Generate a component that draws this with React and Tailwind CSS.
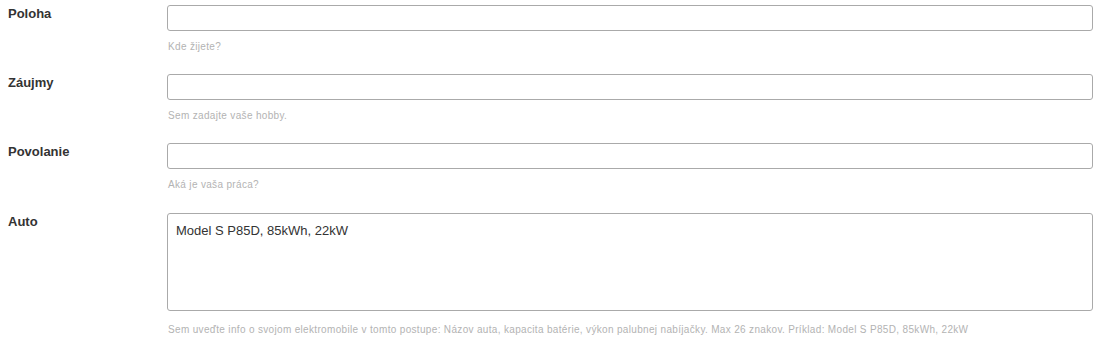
import React from 'react';

const fields = [
  { label: 'Poloha', hint: 'Kde žijete?' },
  { label: 'Záujmy', hint: 'Sem zadajte vaše hobby.' },
  { label: 'Povolanie', hint: 'Aká je vaša práca?' },
];

const Field = ({ label, hint, children, topClass = 'pt-[5px]', hintClass = 'mt-[9px] mb-[20px]' }) => (
  <div className="flex">
    <label className={`w-[167px] shrink-0 pl-2 text-[13px] leading-[18px] font-bold text-[#333] ${topClass}`}>
      {label}
    </label>
    <div className={`w-[926px] ${topClass}`}>
      {children}
      <p className={`text-[10px] leading-[14px] tracking-[0.33px] text-[#b3b3b3] pl-px ${hintClass}`}>{hint}</p>
    </div>
  </div>
);

export default function App() {
  return (
    <div className="w-[1100px] h-[348px] bg-white overflow-hidden font-['Liberation_Sans',Arial,sans-serif]">
      {fields.map((f) => (
        <div key={f.label} className="-mb-[5px]">
          <Field label={f.label} hint={f.hint}>
            <input
              type="text"
              className="block w-full h-[26px] border border-[#aaa] rounded-[3px] px-2 text-[13px] text-[#333] outline-none"
            />
          </Field>
        </div>
      ))}
      <Field
        label="Auto"
        topClass="pt-[6px]"
        hint="Sem uveďte info o svojom elektromobile v tomto postupe: Názov auta, kapacita batérie, výkon palubnej nabíjačky. Max 26 znakov. Príklad: Model S P85D, 85kWh, 22kW"
        hintClass="mt-[12px]"
      >
        <textarea
          defaultValue="Model S P85D, 85kWh, 22kW"
          className="block w-full h-[98px] border border-[#aaa] rounded-[3px] px-2 pt-[9px] text-[13px] leading-[16px] text-[#333] outline-none resize-none"
        />
      </Field>
    </div>
  );
}
